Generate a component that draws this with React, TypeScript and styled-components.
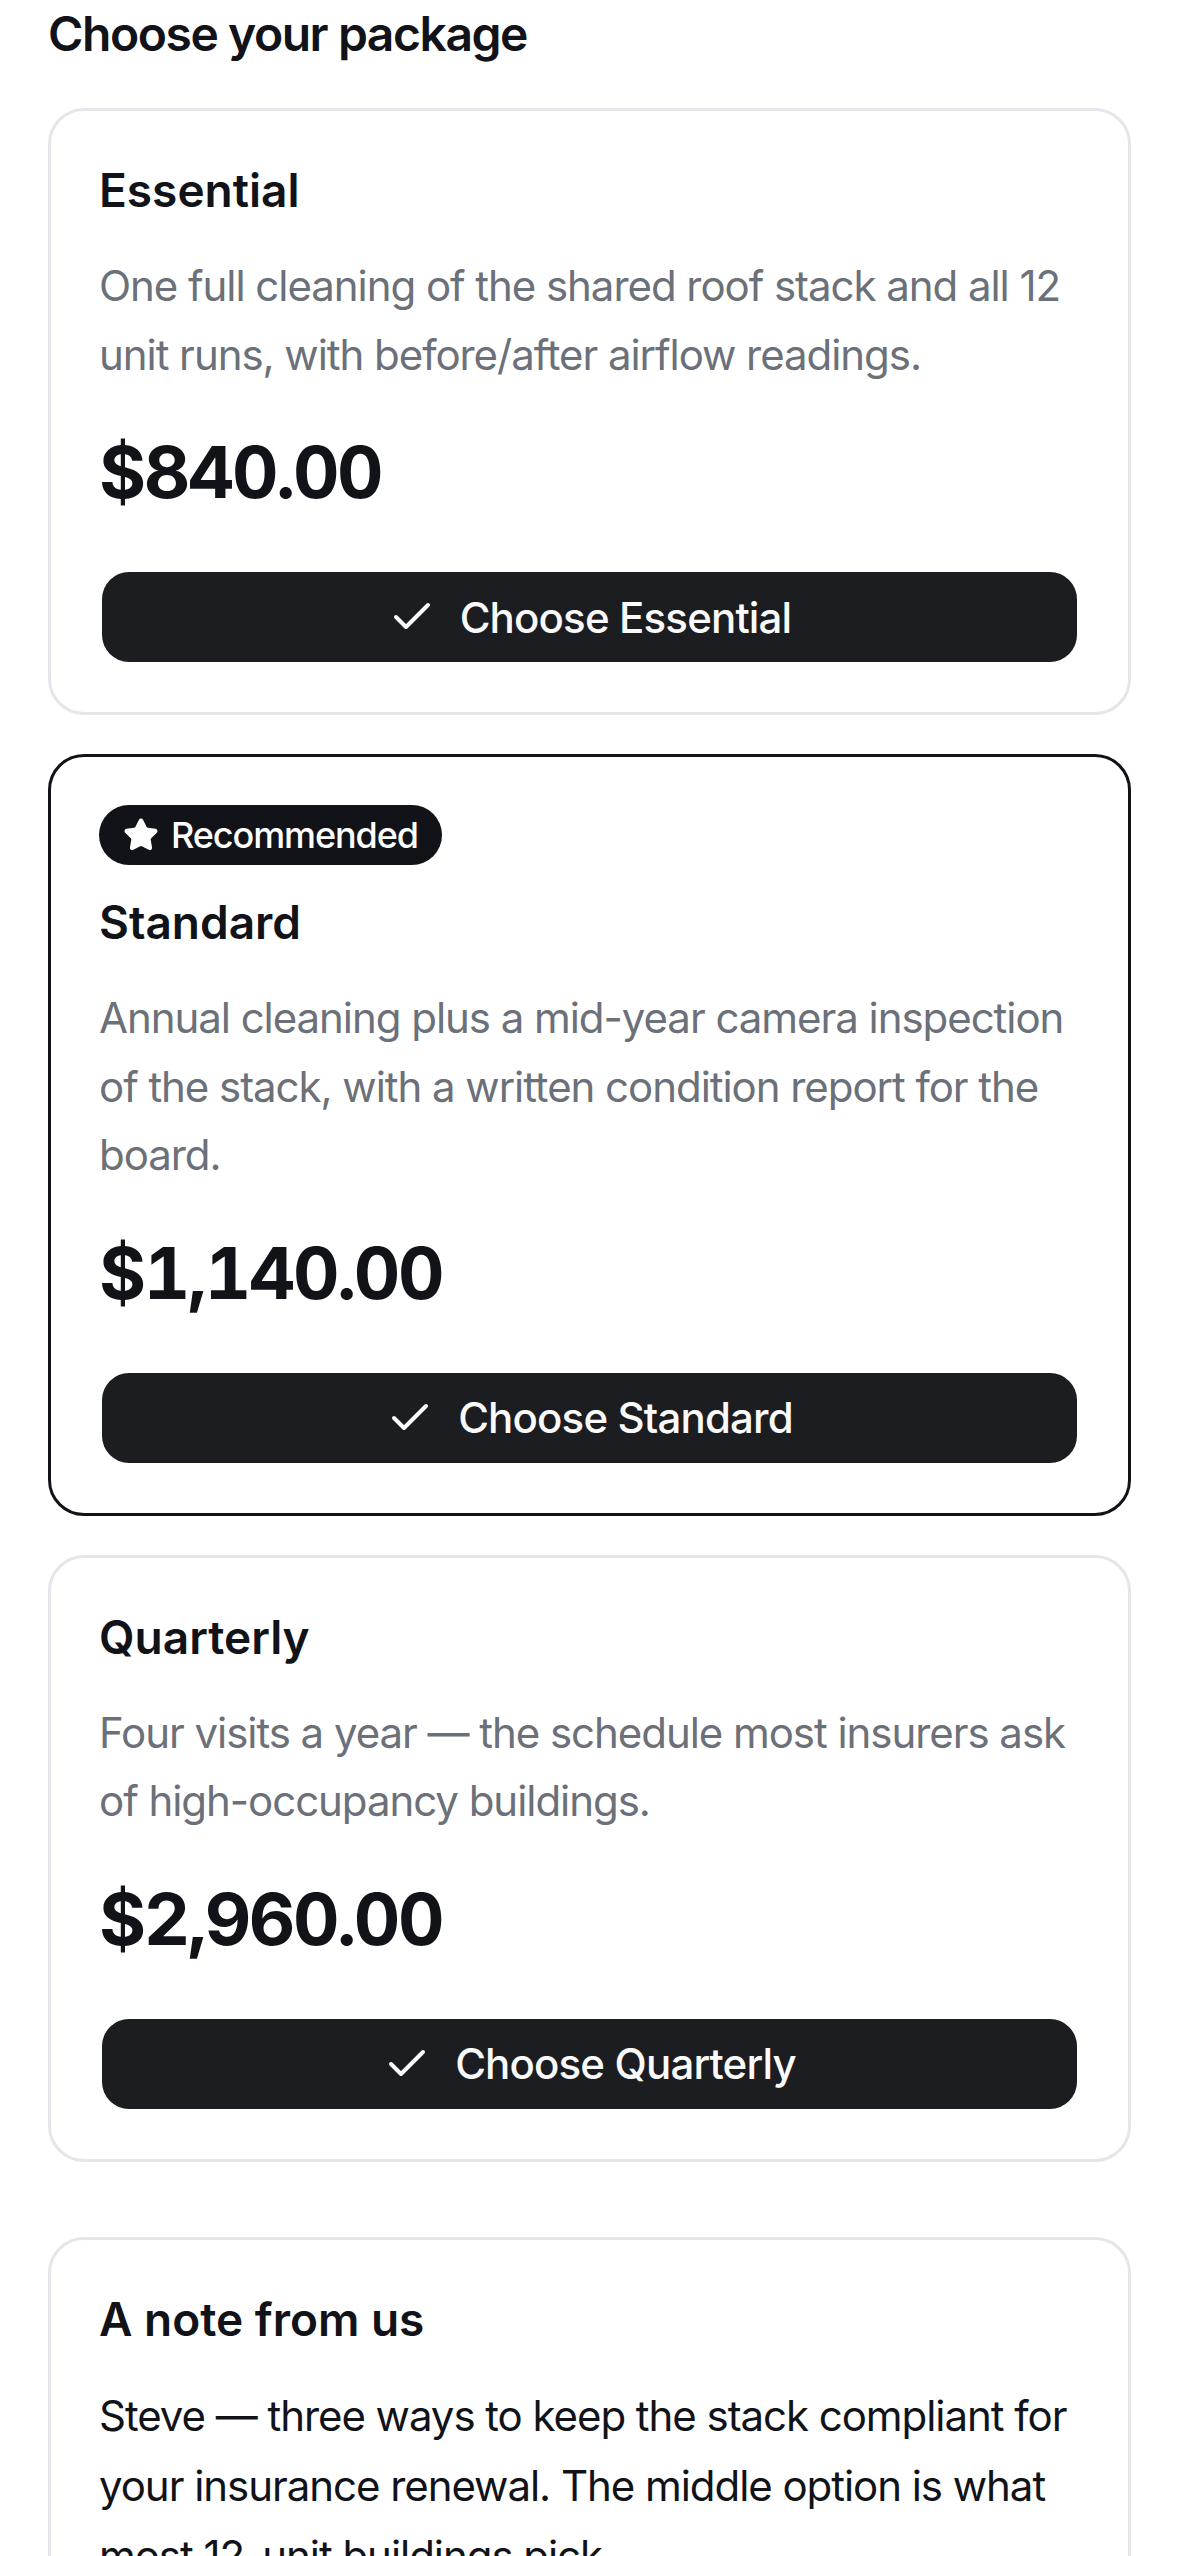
import React from "react";
import styled, { createGlobalStyle } from "styled-components";
import { Check, Star } from "lucide-react";

const Global = createGlobalStyle`
  html, body { margin: 0; padding: 0; background: #ffffff; }
  body {
    font-family: Inter, "Noto Sans", sans-serif;
    color: #111318;
    -webkit-font-smoothing: antialiased;
  }
  * { box-sizing: border-box; }
`;

const Page = styled.main`
  display: flex;
  flex-direction: column;
  padding: 0 48px 48px;
`;

const Heading = styled.h2`
  margin: 0 0 40px;
  font-size: 48px;
  line-height: 68px;
  font-weight: 600;
  letter-spacing: -0.03em;
`;

const PlanList = styled.section`
  display: flex;
  flex-direction: column;
  gap: 39px;
`;

const Card = styled.article<{ $featured?: boolean }>`
  display: flex;
  flex-direction: column;
  padding: 48px;
  border-radius: 36px;
  border: 3px solid ${(p) => (p.$featured ? "#111318" : "#e4e6e9")};
  background: #fff;
`;

const NoteCard = styled(Card)`
  margin-top: 75px;
`;

const Badge = styled.span`
  align-self: flex-start;
  display: inline-flex;
  align-items: center;
  gap: 12px;
  height: 60px;
  padding: 0 24px;
  margin-bottom: 26px;
  border-radius: 999px;
  background: #111318;
  color: #fff;
  font-size: 36px;
  font-weight: 500;
  letter-spacing: -0.03em;
`;

const Title = styled.h3`
  margin: 0 0 30px;
  font-size: 46px;
  line-height: 63px;
  font-weight: 600;
  letter-spacing: 0;
`;

const Desc = styled.p<{ $tone?: "muted" | "strong" }>`
  margin: 0 0 35px;
  font-size: 42px;
  line-height: ${(p) => (p.$tone === "strong" ? "70px" : "68.5px")};
  font-weight: 400;
  letter-spacing: -0.025em;
  color: ${(p) => (p.$tone === "strong" ? "#111318" : "#6b7079")};
`;

const Price = styled.div`
  margin: 0 0 52px;
  font-size: 72px;
  line-height: 96px;
  font-weight: 700;
  letter-spacing: -0.034em;
  font-variant-numeric: tabular-nums;
`;

const ChooseButton = styled.button`
  display: flex;
  align-items: center;
  justify-content: center;
  gap: 24px;
  height: 90px;
  margin: 0 3px 2px;
  border: 0;
  border-radius: 27px;
  background: #1b1d21;
  color: #fafafa;
  font-family: inherit;
  font-size: 42px;
  font-weight: 500;
  letter-spacing: -0.02em;
  cursor: pointer;
`;

type Plan = {
  name: string;
  desc: string;
  price: string;
  featured?: boolean;
};

const plans: Plan[] = [
  {
    name: "Essential",
    desc: "One full cleaning of the shared roof stack and all 12 unit runs, with before/after airflow readings.",
    price: "$840.00",
  },
  {
    name: "Standard",
    desc: "Annual cleaning plus a mid-year camera inspection of the stack, with a written condition report for the board.",
    price: "$1,140.00",
    featured: true,
  },
  {
    name: "Quarterly",
    desc: "Four visits a year \u2014 the schedule most insurers ask of high-occupancy buildings.",
    price: "$2,960.00",
  },
];

export default function App() {
  return (
    <>
      <Global />
      <Page>
        <Heading>Choose your package</Heading>
        <PlanList>
          {plans.map((p) => (
            <Card key={p.name} $featured={p.featured}>
              {p.featured && (
                <Badge>
                  <Star size={36} fill="currentColor" strokeWidth={2} />
                  Recommended
                </Badge>
              )}
              <Title>{p.name}</Title>
              <Desc $tone="muted">{p.desc}</Desc>
              <Price>{p.price}</Price>
              <ChooseButton type="button">
                <Check size={48} strokeWidth={2} />
                Choose {p.name}
              </ChooseButton>
            </Card>
          ))}
        </PlanList>
        <NoteCard as="section">
          <Title>A note from us</Title>
          <Desc $tone="strong">
            Steve {"\u2014"} three ways to keep the stack compliant for your insurance renewal. The middle option
            is what most 12-unit buildings pick.
          </Desc>
        </NoteCard>
      </Page>
    </>
  );
}
